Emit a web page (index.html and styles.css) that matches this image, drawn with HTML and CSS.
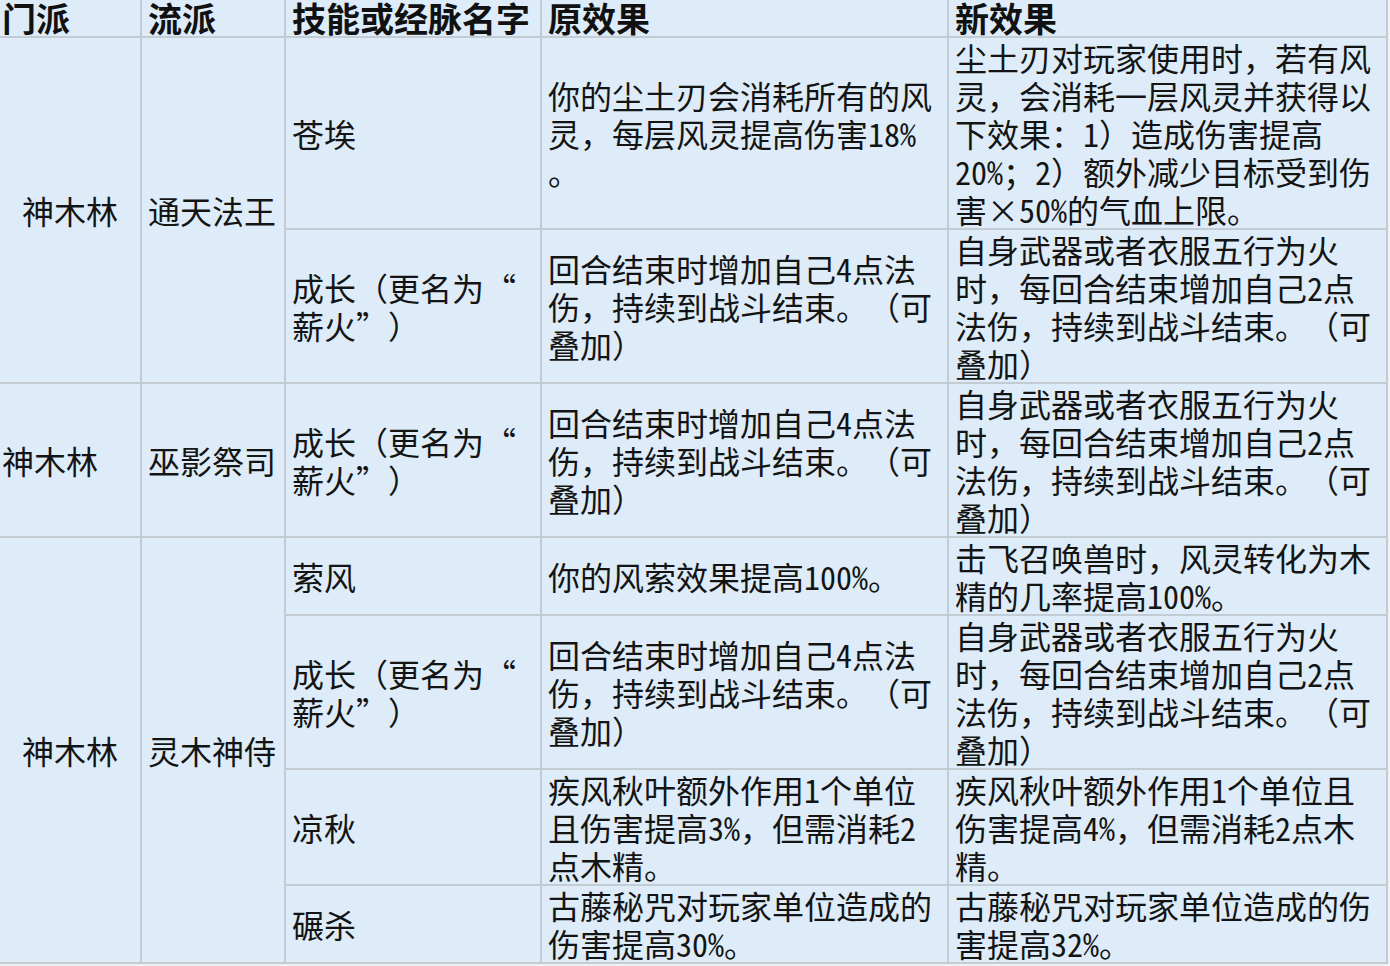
FILE: index.html
```html
<!DOCTYPE html>
<html lang="zh-CN">
<head>
<meta charset="utf-8">
<title>神木林技能调整</title>
<link rel="stylesheet" href="styles.css">
</head>
<body>
<table class="tbl">
  <colgroup>
    <col class="w1"><col class="w2"><col class="w3"><col class="w4"><col class="w5">
  </colgroup>
  <thead>
    <tr class="head">
      <th class="first">门派</th>
      <th>流派</th>
      <th>技能或经脉名字</th>
      <th>原效果</th>
      <th>新效果</th>
    </tr>
  </thead>
  <tbody>
    <tr>
      <td class="first c" rowspan="2">神木林</td>
      <td rowspan="2">通天法王</td>
      <td>苍埃</td>
      <td>你的尘土刃会消耗所有的风<br>灵，每层风灵提高伤害<span class="n">18%</span><br>。</td>
      <td>尘土刃对玩家使用时，若有风<br>灵，会消耗一层风灵并获得以<br>下效果：<span class="n">1</span>）造成伤害提高<br><span class="n">20%</span>；<span class="n">2</span>）额外减少目标受到伤<br>害×<span class="n">50%</span>的气血上限。</td>
    </tr>
    <tr>
      <td>成长（更名为“<br>薪火”）</td>
      <td>回合结束时增加自己<span class="n">4</span>点法<br>伤，持续到战斗结束。（可<br>叠加）</td>
      <td>自身武器或者衣服五行为火<br>时，每回合结束增加自己<span class="n">2</span>点<br>法伤，持续到战斗结束。（可<br>叠加）</td>
    </tr>
    <tr>
      <td class="first">神木林</td>
      <td>巫影祭司</td>
      <td>成长（更名为“<br>薪火”）</td>
      <td>回合结束时增加自己<span class="n">4</span>点法<br>伤，持续到战斗结束。（可<br>叠加）</td>
      <td>自身武器或者衣服五行为火<br>时，每回合结束增加自己<span class="n">2</span>点<br>法伤，持续到战斗结束。（可<br>叠加）</td>
    </tr>
    <tr>
      <td class="first c" rowspan="4">神木林</td>
      <td rowspan="4">灵木神侍</td>
      <td>萦风</td>
      <td>你的风萦效果提高<span class="n">100%</span>。</td>
      <td>击飞召唤兽时，风灵转化为木<br>精的几率提高<span class="n">100%</span>。</td>
    </tr>
    <tr>
      <td>成长（更名为“<br>薪火”）</td>
      <td>回合结束时增加自己<span class="n">4</span>点法<br>伤，持续到战斗结束。（可<br>叠加）</td>
      <td>自身武器或者衣服五行为火<br>时，每回合结束增加自己<span class="n">2</span>点<br>法伤，持续到战斗结束。（可<br>叠加）</td>
    </tr>
    <tr>
      <td>凉秋</td>
      <td>疾风秋叶额外作用<span class="n">1</span>个单位<br>且伤害提高<span class="n">3%</span>，但需消耗<span class="n">2</span><br>点木精。</td>
      <td>疾风秋叶额外作用<span class="n">1</span>个单位且<br>伤害提高<span class="n">4%</span>，但需消耗<span class="n">2</span>点木<br>精。</td>
    </tr>
    <tr>
      <td>碾杀</td>
      <td>古藤秘咒对玩家单位造成的<br>伤害提高<span class="n">30%</span>。</td>
      <td>古藤秘咒对玩家单位造成的伤<br>害提高<span class="n">32%</span>。</td>
    </tr>
  </tbody>
</table>
</body>
</html>
```

FILE: styles.css
```css
html, body {
  margin: 0;
  padding: 0;
}
body {
  background: #eef2f5;
  width: 1390px;
  height: 966px;
  overflow: hidden;
  font-family: "Noto Sans CJK SC", "Noto Sans", sans-serif;
  color: #141414;
}
.tbl {
  table-layout: fixed;
  border-collapse: collapse;
  width: 1387px;
  background: #ddecf8;
  text-spacing-trim: space-all;
}
.w1 { width: 141px; }
.w2 { width: 144px; }
.w3 { width: 256px; }
.w4 { width: 407px; }
.w5 { width: 439px; }

.tbl th,
.tbl td {
  border: 2px solid #c3ccd3;
  padding: 0 2px 0 6px;
  vertical-align: middle;
  text-align: left;
  white-space: nowrap;
  overflow: visible;
  text-spacing-trim: space-all;
}
.tbl th {
  font-size: 34px;
  font-weight: 700;
  line-height: 36px;
  border-top: none;
  color: #111;
}
.tbl td {
  font-size: 32px;
  font-weight: 400;
  line-height: 38px;
}
.tbl .first {
  border-left: none;
  padding-left: 2px;
}
.tbl .c {
  text-align: center;
  padding: 0;
}
.n {
  font-feature-settings: "hwid" 1;
}
```
